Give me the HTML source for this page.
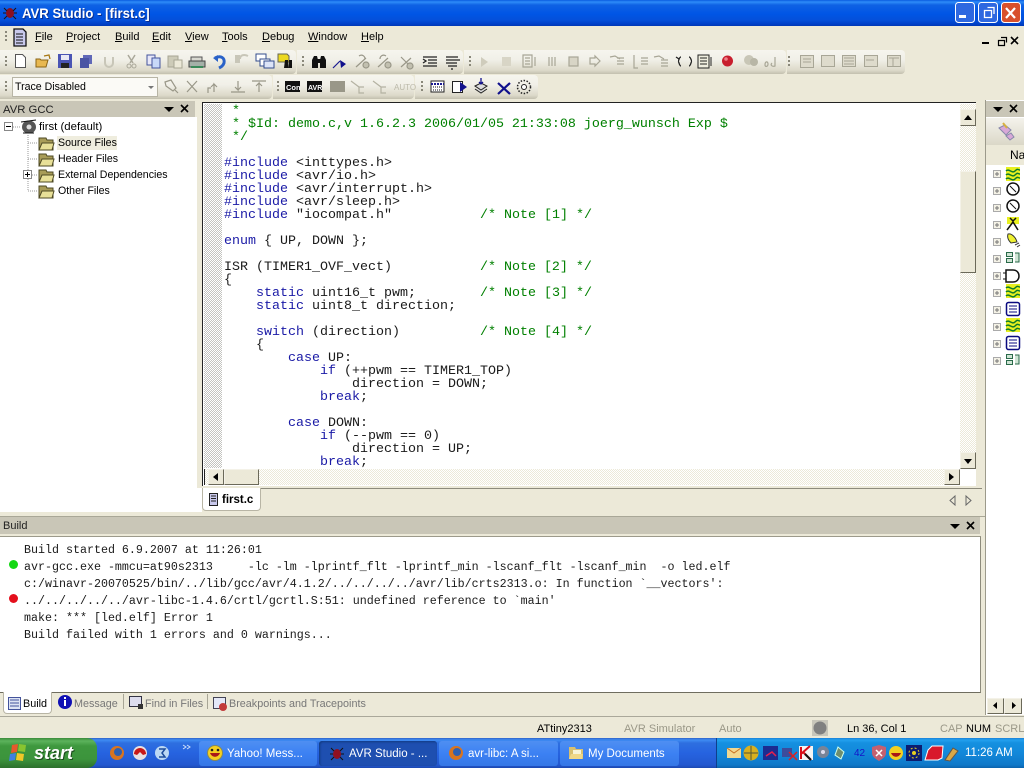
<!DOCTYPE html>
<html><head><meta charset="utf-8"><title>AVR Studio</title>
<style>
html,body{margin:0;padding:0;width:1024px;height:768px;overflow:hidden;background:#ece9d8}
body{position:relative;font:11px/13px "Liberation Sans",sans-serif;color:#000}
.a{position:absolute;white-space:nowrap}
.tb{position:absolute;background:linear-gradient(#f6f5ee,#f1f0e8 40%,#dcd9c9 85%,#c2bfae);border-radius:0 4px 4px 0}
.hd{position:absolute;background:#c9c6b7}
.dith{background:repeating-conic-gradient(#c4c4c0 0 25%,#fff 0 50%) 0 0/2px 2px}
.ltdith{background:repeating-conic-gradient(#ece9d8 0 25%,#fff 0 50%) 0 0/2px 2px}
pre{position:absolute;margin:0;font:13.33px/13px "Liberation Mono",monospace;color:#1a1a1a}
.c{color:#008000}.k{color:#1a1aa6}
.sb{position:absolute;background:#ece9d8;border:1px solid;border-color:#f4f2e8 #6b6959 #6b6959 #f4f2e8;box-sizing:border-box}
.tbtn{position:absolute;top:741px;height:25px;border-radius:3px;background:linear-gradient(#4f8ff2,#3c81f3 50%,#3577e6);color:#fff;font-size:11.5px;line-height:25px;box-sizing:border-box;white-space:nowrap}
u{text-decoration:underline}
.m{top:31px}
.t{font-size:10.6px}
.q{font-size:10.8px;color:#777;top:698px}
.s{top:723px}
svg text{font-family:"Liberation Sans",sans-serif}
</style></head><body>

<!-- title bar -->
<div class="a" style="left:0;top:0;width:1024px;height:26px;background:linear-gradient(#0a5ce0 0,#2e8cf8 2px,#0f62e4 5px,#0055e5 14px,#0450da 20px,#0040c8 24px,#0038b4 26px)"></div>
<div class="a" style="left:22px;top:5px;color:#fff;font:bold 14px/16px 'Liberation Sans',sans-serif;text-shadow:1px 1px #0a2c8c;transform:scaleX(.94);transform-origin:0 0">AVR Studio - [first.c]</div>

<!-- menu -->
<div class="a m" style="left:35px"><u>F</u>ile</div>
<div class="a m" style="left:66px"><u>P</u>roject</div>
<div class="a m" style="left:115px"><u>B</u>uild</div>
<div class="a m" style="left:152px"><u>E</u>dit</div>
<div class="a m" style="left:185px"><u>V</u>iew</div>
<div class="a m" style="left:222px"><u>T</u>ools</div>
<div class="a m" style="left:262px"><u>D</u>ebug</div>
<div class="a m" style="left:308px"><u>W</u>indow</div>
<div class="a m" style="left:361px"><u>H</u>elp</div>

<!-- toolbars -->
<div class="tb" style="left:0;top:50px;width:296px;height:24px"></div>
<div class="tb" style="left:297px;top:50px;width:166px;height:24px"></div>
<div class="tb" style="left:464px;top:50px;width:322px;height:24px"></div>
<div class="tb" style="left:787px;top:50px;width:118px;height:24px"></div>
<div class="tb" style="left:0;top:75px;width:272px;height:24px"></div>
<div class="tb" style="left:273px;top:75px;width:141px;height:24px"></div>
<div class="tb" style="left:415px;top:75px;width:123px;height:24px"></div>
<div class="a" style="left:12px;top:77px;width:146px;height:20px;background:#fbfaf6;border:1px solid #b8b5a5;box-sizing:border-box;padding:3px 0 0 2px;font-size:10.6px">Trace Disabled</div>

<!-- left panel -->
<div class="a" style="left:0;top:117px;width:197px;height:395px;background:#fff"></div>
<div class="a" style="left:197px;top:488px;width:5px;height:24px;background:#fff"></div>
<div class="hd" style="left:0;top:101px;width:195px;height:16px"></div>
<div class="a" style="left:3px;top:103px;color:#222;font-size:11.3px;padding-top:.5px">AVR GCC</div>
<div class="a" style="left:39px;top:121px;font-size:11.4px">first (default)</div>
<div class="a" style="left:57px;top:136px;width:60px;height:14px;background:#efedde"></div>
<div class="a t" style="left:58px;top:137px">Source Files</div>
<div class="a t" style="left:58px;top:153px">Header Files</div>
<div class="a t" style="left:58px;top:169px">External Dependencies</div>
<div class="a t" style="left:58px;top:185px">Other Files</div>

<!-- editor -->
<div class="a" style="left:202px;top:102px;width:774px;height:384px;background:#fff;border-top:1px solid #222;border-left:1px solid #222;box-sizing:border-box"></div>
<div class="a dith" style="left:204px;top:104px;width:18px;height:364px"></div>
<div class="a" style="left:224px;top:104px;width:736px;height:364px;overflow:hidden">
<pre style="left:0;top:0;padding-top:1px"><span class="c"> *
 * $Id: demo.c,v 1.6.2.3 2006/01/05 21:33:08 joerg_wunsch Exp $
 */</span>

<span class="k">#include</span> &lt;inttypes.h&gt;
<span class="k">#include</span> &lt;avr/io.h&gt;
<span class="k">#include</span> &lt;avr/interrupt.h&gt;
<span class="k">#include</span> &lt;avr/sleep.h&gt;
<span class="k">#include</span> "iocompat.h"           <span class="c">/* Note [1] */</span>

<span class="k">enum</span> { UP, DOWN };

ISR (TIMER1_OVF_vect)           <span class="c">/* Note [2] */</span>
{
    <span class="k">static</span> uint16_t pwm;        <span class="c">/* Note [3] */</span>
    <span class="k">static</span> uint8_t direction;

    <span class="k">switch</span> (direction)          <span class="c">/* Note [4] */</span>
    {
        <span class="k">case</span> UP:
            <span class="k">if</span> (++pwm == TIMER1_TOP)
                direction = DOWN;
            <span class="k">break</span>;

        <span class="k">case</span> DOWN:
            <span class="k">if</span> (--pwm == 0)
                direction = UP;
            <span class="k">break</span>;
</pre></div>
<!-- v scroll -->
<div class="a ltdith" style="left:960px;top:104px;width:16px;height:364px"></div>
<div class="sb" style="left:960px;top:109px;width:16px;height:17px"></div>
<div class="sb" style="left:960px;top:171px;width:16px;height:102px"></div>
<div class="sb" style="left:960px;top:452px;width:16px;height:17px"></div>
<!-- h scroll -->
<div class="a ltdith" style="left:204px;top:469px;width:756px;height:16px"></div>
<div class="a" style="left:204px;top:469px;width:1px;height:16px;background:#222"></div>
<div class="sb" style="left:208px;top:469px;width:16px;height:16px"></div>
<div class="sb" style="left:224px;top:469px;width:35px;height:16px"></div>
<div class="sb" style="left:944px;top:469px;width:16px;height:16px"></div>
<!-- tab strip -->
<div class="a" style="left:202px;top:488px;width:780px;height:1px;background:#8d8b7c"></div>
<div class="a" style="left:202px;top:488px;width:59px;height:23px;background:#fff;border:1px solid #b8b5a5;border-top:none;border-radius:0 0 4px 4px;box-sizing:border-box"></div>
<div class="a" style="left:222px;top:494px;font:bold 11.5px/13px 'Liberation Sans',sans-serif">first.c</div>

<!-- build panel -->
<div class="a" style="left:0;top:516px;width:985px;height:1px;background:#a9a797"></div>
<div class="hd" style="left:0;top:517px;width:980px;height:17px"></div>
<div class="a" style="left:3px;top:520px;color:#222">Build</div>
<div class="a" style="left:0;top:536px;width:981px;height:157px;background:#fff;border-top:1px solid #9c9a8b;border-bottom:1px solid #6f6d5f;border-right:1px solid #8d8b7c;box-sizing:border-box"></div>
<pre style="left:24px;top:542px;line-height:17px;font-size:11.67px">Build started 6.9.2007 at 11:26:01
avr-gcc.exe -mmcu=at90s2313     -lc -lm -lprintf_flt -lprintf_min -lscanf_flt -lscanf_min  -o led.elf
c:/winavr-20070525/bin/../lib/gcc/avr/4.1.2/../../../../avr/lib/crts2313.o: In function `__vectors':
../../../../../avr-libc-1.4.6/crtl/gcrtl.S:51: undefined reference to `main'
make: *** [led.elf] Error 1
Build failed with 1 errors and 0 warnings...</pre>

<!-- bottom tabs -->
<div class="a" style="left:3px;top:692px;width:49px;height:22px;background:#fff;border:1px solid #b8b5a5;border-top:none;border-radius:0 0 4px 4px;box-sizing:border-box"></div>
<div class="a" style="left:23px;top:698px;font-size:10.8px">Build</div>
<div class="a q" style="left:74px">Message</div>
<div class="a q" style="left:145px">Find in Files</div>
<div class="a q" style="left:229px">Breakpoints and Tracepoints</div>
<div class="a" style="left:0;top:716px;width:1024px;height:1px;background:#aaa89a"></div>

<!-- right panel -->
<div class="a" style="left:985px;top:100px;width:39px;height:615px;background:#fff;border-left:1px solid #9c9a8b;box-sizing:border-box"></div>
<div class="hd" style="left:986px;top:101px;width:38px;height:16px"></div>
<div class="a" style="left:986px;top:118px;width:38px;height:27px;background:linear-gradient(#f4f3ec,#dbd8c8)"></div>
<div class="a" style="left:986px;top:145px;width:38px;height:20px;background:#ece9d8"></div>
<div class="a" style="left:1010px;top:149px;font-size:12px">Na</div>
<div class="sb" style="left:987px;top:698px;width:17px;height:16px"></div>
<div class="sb" style="left:1004px;top:698px;width:18px;height:16px"></div>

<!-- status -->
<div class="a s" style="left:537px">ATtiny2313</div>
<div class="a s" style="left:624px;color:#9a9888">AVR Simulator</div>
<div class="a s" style="left:719px;color:#9a9888">Auto</div>
<div class="a s" style="left:847px">Ln 36, Col 1</div>
<div class="a s" style="left:940px;color:#9a9888">CAP</div>
<div class="a s" style="left:966px">NUM</div>
<div class="a s" style="left:995px;color:#9a9888">SCRL</div>

<!-- taskbar -->
<div class="a" style="left:0;top:738px;width:1024px;height:30px;background:linear-gradient(#2f62c8 0,#3f8cf3 2px,#2e6fe0 5px,#2663e0 50%,#2358cf 90%,#1c49b0)"></div>
<div class="a" style="left:0;top:738px;width:97px;height:30px;border-radius:0 10px 10px 0;background:linear-gradient(#3a8a3a 0,#5cb35c 3px,#3e983e 8px,#3c943c 70%,#2c702c)"></div>
<div class="a" style="left:34px;top:743px;color:#fff;font:italic bold 18px/20px 'Liberation Sans',sans-serif;text-shadow:1px 1px #1c4a1c">start</div>
<div class="tbtn" style="left:199px;width:118px;padding:1px 0 0 28px">Yahoo! Mess...</div>
<div class="tbtn" style="left:319px;width:118px;padding:1px 0 0 30px;background:#1e4fb0;box-shadow:inset 1px 1px 2px #123a80">AVR Studio - ...</div>
<div class="tbtn" style="left:439px;width:119px;padding:1px 0 0 29px">avr-libc: A si...</div>
<div class="tbtn" style="left:560px;width:119px;padding:1px 0 0 28px">My Documents</div>
<div class="a" style="left:716px;top:738px;width:308px;height:30px;background:linear-gradient(#1a7fd8 0,#22a0ee 2px,#1590e0 5px,#1288da 50%,#0f78c8 90%,#0c62ac);border-left:1px solid #0f3f8c;box-sizing:border-box"></div>
<div class="a" style="left:965px;top:747px;color:#fff;font-size:11.5px">11:26 AM</div>
<div class="a" style="left:854px;top:747px;color:#1414c8;font-size:10px">42</div>

<!-- icons -->
<svg class="a" style="left:0;top:0" width="1024" height="768" viewBox="0 0 1024 768" xmlns="http://www.w3.org/2000/svg">
<!-- title bug -->
<g fill="#8a1020"><ellipse cx="10" cy="13" rx="4" ry="5"/></g><path d="M4 8l3 3M16 8l-3 3M3 13h3M17 13h-3M4 19l3-3M16 19l-3-3" stroke="#201010" fill="none"/>
<!-- window buttons -->
<g stroke="#fff" stroke-width="1">
<rect x="955.5" y="2.5" width="19" height="20" rx="3" fill="#2e68e0"/>
<rect x="978.5" y="2.5" width="19" height="20" rx="3" fill="#2e68e0"/>
<rect x="1001.5" y="2.5" width="19" height="20" rx="3" fill="#d8502c"/></g>
<rect x="959" y="15" width="7" height="3" fill="#fff"/>
<path d="M984.5 10.5h7v7h-7zM987.5 7.5h6.500v6.500" fill="none" stroke="#fff" stroke-width="1.300"/>
<path d="M1006 8l9 10M1015 8l-9 10" stroke="#fff" stroke-width="2.200"/>
<!-- mdi buttons -->
<rect x="982" y="42" width="7" height="2" fill="#000"/>
<path d="M998.500 40.500h6v5h-6zM1001 37.500h5.500v5" fill="none" stroke="#000" stroke-width="1.200"/>
<path d="M1011 37l7 7M1018 37l-7 7" stroke="#000" stroke-width="1.600"/>
<!-- grippers -->
<g fill="#8a887a"><rect x="5" y="31" width="2" height="2"/><rect x="5" y="35" width="2" height="2"/><rect x="5" y="39" width="2" height="2"/>
<rect x="5" y="56" width="2" height="2"/><rect x="5" y="60" width="2" height="2"/><rect x="5" y="64" width="2" height="2"/>
<rect x="5" y="81" width="2" height="2"/><rect x="5" y="85" width="2" height="2"/><rect x="5" y="89" width="2" height="2"/>
<rect x="302" y="56" width="2" height="2"/><rect x="302" y="60" width="2" height="2"/><rect x="302" y="64" width="2" height="2"/>
<rect x="469" y="56" width="2" height="2"/><rect x="469" y="60" width="2" height="2"/><rect x="469" y="64" width="2" height="2"/>
<rect x="788" y="56" width="2" height="2"/><rect x="788" y="60" width="2" height="2"/><rect x="788" y="64" width="2" height="2"/>
<rect x="277" y="81" width="2" height="2"/><rect x="277" y="85" width="2" height="2"/><rect x="277" y="89" width="2" height="2"/>
<rect x="421" y="81" width="2" height="2"/><rect x="421" y="85" width="2" height="2"/><rect x="421" y="89" width="2" height="2"/></g>
<!-- menu doc -->
<path d="M14 29h9l3 3v14H14z" fill="#c9c9ec" stroke="#111" stroke-width="1.300"/><path d="M16 34h7M16 37h7M16 40h7M16 43h7" stroke="#111"/>
<!-- toolbar 1 -->
<path d="M15.500 54.500h7l3 3v10h-10z" fill="#fff" stroke="#555"/>
<path d="M36 67v-8h4l1 1h7l-2 7z" fill="#e8b850" stroke="#8a6414"/><path d="M44 56l5-1 1 4" fill="none" stroke="#a87814" stroke-width="1.300"/>
<rect x="58" y="54" width="14" height="14" fill="#4a54b4"/><rect x="61" y="55" width="8" height="5" fill="#e8e8f4"/><rect x="61" y="63" width="8" height="5" fill="#222"/>
<rect x="83" y="55" width="9" height="9" fill="#6068b8"/><rect x="80" y="58" width="9" height="10" fill="#4a54a4"/>
<path d="M105 57v6a4 4 0 0 0 8 0v-6" fill="none" stroke="#c8c6b8" stroke-width="2"/>
<path d="M128 55l5 8M135 55l-5 8" stroke="#aaa89a" stroke-width="1.500"/><circle cx="129" cy="66" r="2" fill="none" stroke="#aaa89a"/><circle cx="134" cy="66" r="2" fill="none" stroke="#aaa89a"/>
<rect x="147" y="55" width="8" height="10" fill="#e8e8f8" stroke="#44549c"/><rect x="152" y="58" width="8" height="10" fill="#c8d8f8" stroke="#44549c"/>
<rect x="168" y="56" width="10" height="11" fill="#cdcbb8" stroke="#a8a694"/><rect x="174" y="60" width="8" height="8" fill="#ece9d8" stroke="#a8a694"/>
<path d="M191 57h11v4h-11z" fill="#d8d8d0" stroke="#555"/><path d="M189 61h16v6h-16z" fill="#a4b0a8" stroke="#444"/><rect x="191" y="66" width="12" height="2" fill="#3a8a5a"/>
<path d="M215 58c6-3 10 0 9 5-1 3-3 4-5 5" fill="none" stroke="#2a62c8" stroke-width="3"/><path d="M213 58l5-3v7z" fill="#2a62c8"/>
<path d="M248 56c-4-2-8-1-8 3" fill="none" stroke="#c8c6b8" stroke-width="2"/><path d="M235 55h5v8h-5z" fill="#c8c6b8"/>
<rect x="256" y="54" width="10" height="7" fill="#fff" stroke="#334c8c"/><rect x="260" y="59" width="10" height="7" fill="#fff" stroke="#334c8c"/><rect x="264" y="61" width="10" height="7" fill="#dce4f8" stroke="#334c8c"/>
<path d="M278 54h9l2 2v6h-11z" fill="#ecd820" stroke="#665"/><path d="M285 60h3v8h-4zM289 60h3v8h-4z" fill="#111"/>
<path d="M312 60l2-4h3l1 4v8h-6zM320 60l1-4h3l2 4v8h-6zM317 59h4v4h-4z" fill="#111"/>
<path d="M333 68l7-7" stroke="#1a1a90" stroke-width="1.200"/><path d="M340 60l6 4-5 4z" fill="#10108c"/>
<g fill="none" stroke="#999788" stroke-width="1.200"><path d="M356 67l10-9M359 56c3-2 6 0 6 3"/><circle cx="366" cy="65" r="3" fill="#c2c0b0"/><path d="M378 67l10-9M386 56c-3-2-6 0-6 3"/><circle cx="388" cy="65" r="3" fill="#c2c0b0"/><path d="M401 67l10-9M401 57l7 7"/><circle cx="410" cy="66" r="3" fill="#c2c0b0"/></g>
<path d="M423 57h14M428 60h9M428 63h9M423 66h14M423 59l3 2-3 2" fill="none" stroke="#222" stroke-width="1.300"/>
<path d="M446 57h12M446 60h14M446 63h11M448 66h9M452 68v2" fill="none" stroke="#222" stroke-width="1.300"/>
<!-- debug disabled -->
<path d="M481 57l7 5-7 5z" fill="#cfccbc"/><rect x="502" y="57" width="9" height="9" fill="#d8d5c6"/>
<g fill="none" stroke="#a8a696" stroke-width="1.200"><path d="M523 55h9v12h-9zM525 58h5M525 61h5M525 64h5M535 57v9"/><path d="M549 57v9M552 57v9M555 57v9"/><rect x="569" y="57" width="9" height="9" fill="#d8d5c6"/><path d="M590 58h5v-2l5 5-5 5v-2h-5z"/><path d="M610 57l5-1 5 3M617 58h7M617 61h7M617 64h7"/><path d="M634 55v13h4M641 58h7M641 61h7M641 64h7"/><path d="M654 57l5-1 5 3M661 60h7M661 63h7M661 66h7"/></g>
<path d="M681 57c-2 0-2 4-3 4 1 0 1 5 3 5M689 57c2 0 2 4 3 4-1 0-1 5-3 5M676 57l3 2" fill="none" stroke="#222" stroke-width="1.300"/>
<path d="M698 55h11v13h-11zM700 58h7M700 61h7M700 64h7M711 57v9" fill="#eeeddf" stroke="#222"/>
<circle cx="727.500" cy="61" r="5.500" fill="#c81e2e"/><circle cx="726" cy="59" r="1.800" fill="#ee8088"/>
<circle cx="749" cy="60" r="5" fill="#c8c6b6"/><circle cx="754" cy="62" r="4" fill="#b8b6a6"/>
<path d="M765 65c0-4 3-4 3-1s-3 3-3 1M775 57v9c-3 1-5-1-3-3" fill="none" stroke="#a8a696" stroke-width="1.200"/>
<g fill="#dedbcc" stroke="#a8a696"><rect x="800.500" y="55.500" width="13" height="12"/><rect x="821.500" y="55.500" width="13" height="11"/><rect x="842.500" y="55.500" width="13" height="11"/><rect x="864.500" y="55.500" width="13" height="11"/><rect x="887.500" y="55.500" width="13" height="11"/></g>
<path d="M844 58h10M844 61h10M844 64h10M889 58h10M893 58v8M866 60h8M803 59h8M803 62h8" stroke="#a8a696" fill="none"/>
<!-- combo arrow, toolbar 2 -->
<path d="M148 86h6l-3 3z" fill="#777"/>
<g fill="none" stroke="#999788" stroke-width="1.200"><path d="M165 82l6-2 5 8-3 3-7-5zM175 90l3 3"/><path d="M187 81l10 11M197 81l-10 11"/><path d="M208 93v-5h3M214 92v-8l3 3m-3-3l-3 3"/><path d="M231 92h14M238 81v9l-3-3m3 3l3-3"/><path d="M252 81h14M259 92v-9l-3 3m3-3l3 3"/></g>
<rect x="285" y="81" width="15" height="11" fill="#111"/><text x="286" y="90" font-size="7.500" font-weight="bold" fill="#fff">Con</text>
<rect x="307" y="81" width="15" height="11" fill="#111"/><text x="308" y="90" font-size="7" font-weight="bold" fill="#fff">AVR</text>
<rect x="330" y="81" width="15" height="11" fill="#999788"/>
<g fill="none" stroke="#b4b2a2" stroke-width="1.200"><path d="M351 81l8 6M359 87h5M359 87v6h5"/><path d="M373 81l8 6M381 87h5M381 87v6h5"/></g>
<text x="394" y="90" font-size="8" fill="#bcbaaa">AUTO</text>
<rect x="431" y="81" width="13" height="11" fill="#fff" stroke="#222"/><path d="M431 84h13" stroke="#1a1a90" stroke-width="2" stroke-dasharray="2 1"/><path d="M433 87h9M433 90h9" stroke="#111" stroke-dasharray="1 1"/>
<rect x="452.500" y="81.500" width="10" height="11" fill="#fff" stroke="#222"/><path d="M460 82l7 5-7 5z" fill="#10108c"/>
<path d="M475 86l6-3 6 3-6 4zM475 89l6 4 6-4" fill="#ddd" stroke="#222"/><path d="M481 78v6M479 82l2 2 2-2" stroke="#10108c" fill="none" stroke-width="1.300"/>
<path d="M498 83l12 11M510 83l-12 11" stroke="#10108c" stroke-width="2.200"/>
<circle cx="524" cy="87" r="6.500" fill="none" stroke="#222" stroke-width="1.500" stroke-dasharray="1.500 1.500"/><circle cx="524" cy="87" r="2.500" fill="#fff" stroke="#222"/>
<!-- panel header -->
<path d="M164 107h10l-5 5z" fill="#000"/><path d="M181 105l7 7M188 105l-7 7" stroke="#000" stroke-width="1.600"/>
<path d="M950 524h10l-5 5z" fill="#000"/><path d="M967 522l7 7M974 522l-7 7" stroke="#000" stroke-width="1.600"/>
<path d="M993 107h10l-5 5z" fill="#000"/><path d="M1010 105l7 7M1017 105l-7 7" stroke="#000" stroke-width="1.600"/>
<!-- tree -->
<path d="M13 127h7M28 143h10M28 159h10M28 175h10M28 191h10M28 135v56" stroke="#999" stroke-dasharray="1 1" fill="none"/>
<rect x="4.500" y="122.500" width="8" height="8" fill="#fff" stroke="#888"/><path d="M6 126.500h5" stroke="#000"/>
<rect x="23.500" y="170.500" width="8" height="8" fill="#fff" stroke="#888"/><path d="M25 174.500h5M27.500 172v5" stroke="#000"/>
<ellipse cx="29" cy="127" rx="7" ry="6.500" fill="#555"/><path d="M21 122l15-2M23 133l11 0" stroke="#111"/><circle cx="29" cy="127" r="2.500" fill="#ddd"/>
<g id="f"><path d="M39 138h7l1 2h6v10H39z" fill="#a89c58" stroke="#4e4a24"/><path d="M39 150l3-7h12l-2 7z" fill="#e8e098" stroke="#4e4a24"/></g>
<g transform="translate(0 16)"><path d="M39 138h7l1 2h6v10H39z" fill="#a89c58" stroke="#4e4a24"/><path d="M39 150l3-7h12l-2 7z" fill="#e8e098" stroke="#4e4a24"/></g>
<g transform="translate(0 32)"><path d="M39 138h7l1 2h6v10H39z" fill="#a89c58" stroke="#4e4a24"/><path d="M39 150l3-7h12l-2 7z" fill="#e8e098" stroke="#4e4a24"/></g>
<g transform="translate(0 48)"><path d="M39 138h7l1 2h6v10H39z" fill="#a89c58" stroke="#4e4a24"/><path d="M39 150l3-7h12l-2 7z" fill="#e8e098" stroke="#4e4a24"/></g>
<!-- scroll arrows -->
<path d="M964 120h8l-4-5z" fill="#000"/><path d="M964 459h8l-4 5z" fill="#000"/><path d="M218 473v8l-5-4z" fill="#000"/><path d="M949 473v8l5-4z" fill="#000"/>
<path d="M955 496v9l-5-4.500zM966 496v9l5-4.500z" fill="#ece9d8" stroke="#666"/>
<path d="M997 702v7l-4-3.500zM1012 702v7l4-3.500z" fill="#000"/>
<!-- build dots -->
<circle cx="13.500" cy="564.500" r="4.500" fill="#14d814"/><circle cx="13.500" cy="598.500" r="4.500" fill="#e40f1c"/>
<!-- tab icons -->
<path d="M209.500 493.500h8v12h-8z" fill="#c9c9ec" stroke="#222"/><path d="M211 496h5M211 498.500h5M211 501h5" stroke="#222"/>
<rect x="8.500" y="697.500" width="12" height="12" fill="#dde4f4" stroke="#44549c"/><path d="M10 700h9M10 703h9M10 706h9" stroke="#44549c"/>
<circle cx="65" cy="702" r="7" fill="#1010b4"/><rect x="64" y="700" width="2" height="6" fill="#fff"/><rect x="64" y="697" width="2" height="2" fill="#fff"/>
<rect x="129.500" y="696.500" width="12" height="10" fill="#dde" stroke="#334"/><rect x="138" y="704" width="5" height="5" fill="#333"/>
<rect x="213.500" y="697.500" width="12" height="11" fill="#e4e8f8" stroke="#445"/><circle cx="223" cy="707" r="4" fill="#c23a3a"/>
<path d="M123.500 694v15M207.500 694v15" stroke="#a8a696"/>
<!-- right tree -->
<g transform="translate(0 -2)">
<g fill="#f4f2e6" stroke="#aaa"><rect x="993.500" y="172.500" width="7" height="7"/><rect x="993.500" y="189.500" width="7" height="7"/><rect x="993.500" y="206.500" width="7" height="7"/><rect x="993.500" y="223.500" width="7" height="7"/><rect x="993.500" y="240.500" width="7" height="7"/><rect x="993.500" y="257.500" width="7" height="7"/><rect x="993.500" y="274.500" width="7" height="7"/><rect x="993.500" y="291.500" width="7" height="7"/><rect x="993.500" y="308.500" width="7" height="7"/><rect x="993.500" y="325.500" width="7" height="7"/><rect x="993.500" y="342.500" width="7" height="7"/><rect x="993.500" y="359.500" width="7" height="7"/></g>
<path d="M995 176h4M997 174v4M995 193h4M997 191v4M995 210h4M997 208v4M995 227h4M997 225v4M995 244h4M997 242v4M995 261h4M997 259v4M995 278h4M997 276v4M995 295h4M997 293v4M995 312h4M997 310v4M995 329h4M997 327v4M995 346h4M997 344v4M995 363h4M997 361v4" stroke="#777" fill="none"/>
<rect x="1006" y="169" width="14" height="14" fill="#e8f020"/><path d="M1006 173c3-3 6 3 9 0s3-1 5-1M1006 177c3-3 6 3 9 0s3-1 5-1M1006 181c3-3 6 3 9 0s3-1 5-1" fill="none" stroke="#0c7a2c" stroke-width="1.500"/>
<circle cx="1013" cy="191" r="6" fill="#fff" stroke="#111" stroke-width="1.500"/><path d="M1010 188l6 6" stroke="#111"/>
<circle cx="1013" cy="208" r="6" fill="#fff" stroke="#111" stroke-width="1.500"/><path d="M1010 205l6 6" stroke="#111"/>
<rect x="1007" y="219" width="12" height="7" fill="#e8f020"/><path d="M1007 232l6-8 5 8M1010 220l3 3 3-3" fill="none" stroke="#111" stroke-width="1.500"/>
<path d="M1008 236c4-1 8 4 9 8l-6 1c-3-3-4-6-3-9z" fill="#eef030" stroke="#333"/><path d="M1015 247l4-2M1017 249l3-2" stroke="#333"/>
<path d="M1006.500 254.500h6v4h-6zM1006.500 260.500h6v4h-6zM1015 255h4v9h-4" fill="#cfe4d4" stroke="#2a6a4a"/>
<path d="M1006 272h7c4 0 6 3 6 6s-2 6-6 6h-7z" fill="#fff" stroke="#111" stroke-width="1.500"/><path d="M1003 275h3M1003 281h3" stroke="#111"/>
<rect x="1006" y="286" width="14" height="14" fill="#e8f020"/><path d="M1006 290c3-3 6 3 9 0s3-1 5-1M1006 294c3-3 6 3 9 0s3-1 5-1M1006 298c3-3 6 3 9 0s3-1 5-1" fill="none" stroke="#0c7a2c" stroke-width="1.500"/>
<rect x="1006.500" y="304.500" width="13" height="13" rx="2" fill="#fff" stroke="#0a0a80" stroke-width="1.500"/><path d="M1009 308h8M1009 311h8M1009 314h8" stroke="#0a0a80"/>
<rect x="1006" y="320" width="14" height="14" fill="#e8f020"/><path d="M1006 324c3-3 6 3 9 0s3-1 5-1M1006 328c3-3 6 3 9 0s3-1 5-1M1006 332c3-3 6 3 9 0s3-1 5-1" fill="none" stroke="#0c7a2c" stroke-width="1.500"/>
<rect x="1006.500" y="338.500" width="13" height="13" rx="2" fill="#fff" stroke="#0a0a80" stroke-width="1.500"/><path d="M1009 342h8M1009 345h8M1009 348h8" stroke="#0a0a80"/>
<path d="M1006.500 356.500h6v4h-6zM1006.500 362.500h6v4h-6zM1015 357h4v9h-4" fill="#cfe4d4" stroke="#2a6a4a"/>
</g>
<path d="M999 128l6-3 6 5-5 5zM1006 136l5-3 3 4-4 3z" fill="#d8a8d8" stroke="#88a"/><path d="M1003 123l4 5" stroke="#d8b040" stroke-width="2"/>
<!-- status circle -->
<rect x="812" y="720" width="16" height="16" fill="#c8c6ba"/><circle cx="820" cy="728" r="6.500" fill="#808080"/>
<!-- start logo -->
<path d="M12 745l6-1-1 8-6 1z" fill="#e8582c"/><path d="M19 744l7 1-1 7-7-1z" fill="#88c430"/><path d="M10 754l6-1-1 7-6 1z" fill="#4080e0"/><path d="M17 753l7 1-1 7-7-1z" fill="#f0c828"/>
<!-- quick launch -->
<circle cx="117" cy="753" r="7" fill="#d87420"/><circle cx="118" cy="752" r="4" fill="#3060b0"/>
<circle cx="140" cy="753" r="7" fill="#e8e0e0"/><path d="M134 754a6 6 0 0 1 12 0l-3 1-3-3-3 3z" fill="#c81818"/>
<circle cx="162" cy="753" r="7" fill="#bcd8f4"/><path d="M159 749h6l-3 4 3 4h-6" fill="none" stroke="#1c4c9c" stroke-width="1.500"/>
<path d="M183 745l3 2-3 2M187 745l3 2-3 2" fill="none" stroke="#cfe0fa"/>
<!-- task icons -->
<circle cx="215" cy="753" r="7.500" fill="#f4d020" stroke="#885"/><path d="M210 753c2 5 8 5 10 0z" fill="#a81818"/><circle cx="212" cy="750" r="1.300" fill="#222"/><circle cx="218" cy="750" r="1.300" fill="#222"/>
<ellipse cx="337" cy="754" rx="4" ry="5" fill="#901020"/><path d="M331 748l3 3M343 748l-3 3M330 754h3M344 754h-3M331 760l3-3M343 760l-3-3" stroke="#111"/>
<circle cx="456" cy="753" r="7" fill="#d87420"/><circle cx="457" cy="752" r="4" fill="#3060b0"/>
<path d="M569 747h6l1 2h7v10h-14z" fill="#d8c070"/><rect x="573" y="750" width="8" height="8" fill="#f8f4d8"/><path d="M569 759l2-5h12l-1 5z" fill="#f0d888"/>
<!-- tray -->
<rect x="727" y="748" width="14" height="10" fill="#f0d890"/><path d="M727 748l7 5 7-5" fill="none" stroke="#c87020"/>
<circle cx="751" cy="753" r="7.500" fill="#d8b020"/><path d="M744 753h14M751 746v14" stroke="#553"/>
<rect x="763" y="746" width="15" height="14" fill="#1c2c90"/><path d="M766 756l6-4 4 4" stroke="#e8204c" fill="none" stroke-width="1.500"/>
<rect x="782" y="748" width="10" height="9" fill="#3c4c9c"/><path d="M789 752l8 8M797 752l-8 8" stroke="#e02020" stroke-width="1.500"/>
<rect x="799" y="746" width="14" height="14" fill="#f4f4f4"/><path d="M801 747v12M801 754l9-8M803 752l8 8" stroke="#d80c18" stroke-width="2"/><path d="M805 754l6 6" stroke="#111" stroke-width="2"/>
<circle cx="823" cy="752" r="6" fill="#788498"/><circle cx="823" cy="752" r="2" fill="#dde"/>
<path d="M838 747l6 5-3 7-6-4z" fill="#6f8e6f" stroke="#cfe"/>
<path d="M872 747l7-2 7 2v6c0 4-4 6-7 8-3-2-7-4-7-8z" fill="#c46070"/><path d="M876 750l6 6M882 750l-6 6" stroke="#fff" stroke-width="1.500"/>
<circle cx="896" cy="753" r="7" fill="#f4d020"/><path d="M891 753c2 5 8 5 10 0z" fill="#a81818"/>
<rect x="906" y="745" width="16" height="16" fill="#0c1c70"/><circle cx="914" cy="753" r="2" fill="#e8d020"/><circle cx="914" cy="753" r="5" fill="none" stroke="#e8d020" stroke-dasharray="2 2"/>
<path d="M925 760l3-10 4-4h11l-1 12-4 2z" fill="#d8182c" stroke="#fff"/>
<path d="M945 760l8-12 5 3-8 10z" fill="#d8a848" stroke="#654"/>
</svg>
</body></html>
